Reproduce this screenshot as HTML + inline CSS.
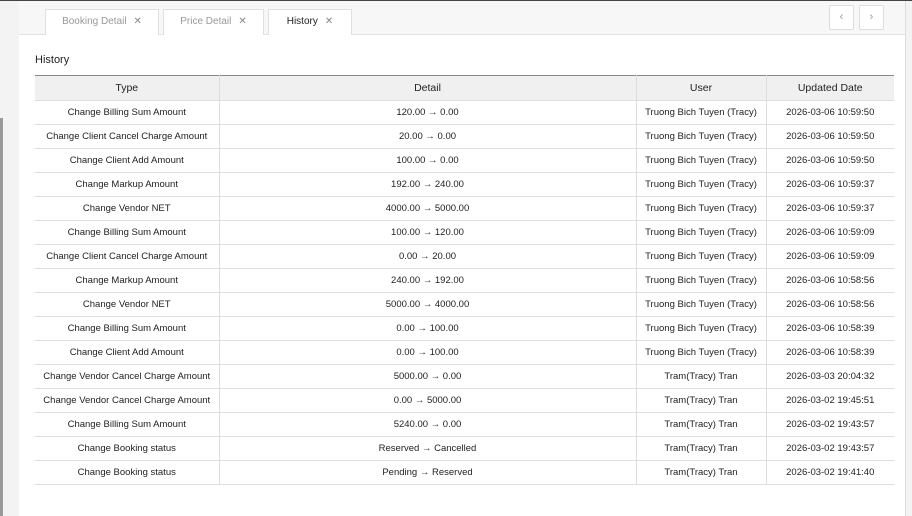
<!DOCTYPE html>
<html><head><style>
*{box-sizing:border-box;margin:0;padding:0}
body{width:912px;height:516px;overflow:hidden;background:#fff;font-family:"Liberation Sans",sans-serif;font-size:10px;color:#222;position:relative}
.top{position:absolute;left:0;top:0;width:912px;height:1px;background:#444}
.lstrip{position:absolute;left:0;top:1px;width:19px;height:515px;background:#f3f3f3}
.lbar{position:absolute;left:0;top:118px;width:3px;height:398px;background:#999}
.rstrip{position:absolute;left:905px;top:1px;width:7px;height:515px;background:#f3f3f3;border-left:1px solid #ddd}
.hdr{position:absolute;left:19px;top:1px;width:886px;height:34px;background:#f7f7f7;border-bottom:1px solid #e2e2e2}
.tab{position:absolute;top:9px;height:26px;border:1px solid #e0e0e0;border-bottom:none;background:#fff;font-size:10px;color:#999;text-align:center;line-height:24px}
.tab .x{color:#888;font-size:10px;margin-left:7px}
.tab.act{color:#222;height:26px}
.nb{position:absolute;top:5px;width:25px;height:25px;border:1px solid #ddd;background:#fff;color:#999;text-align:center;line-height:23px;font-size:11px;border-radius:2px}
h3{position:absolute;left:35px;top:54px;font-size:11px;font-weight:normal;color:#222}
table{position:absolute;left:35px;top:75px;width:859px;border-collapse:collapse;border-top:1px solid #888;border-bottom:1px solid #888}
th{background:#f0f0f0;height:25px;font-weight:normal;font-size:10.5px;border-left:1px solid #ddd;border-bottom:1px solid #ddd}
td{height:24px;text-align:center;font-size:9.5px;border-left:1px solid #ddd;border-bottom:1px solid #ddd;color:#222}
th:first-child,td:first-child{border-left:none}
td:nth-child(2){font-family:"Liberation Sans","DejaVu Sans",sans-serif}
</style></head><body>
<div class="top"></div><div class="lstrip"></div><div class="lbar"></div><div class="rstrip"></div>
<div class="hdr"></div>
<div class="tab" style="left:45px;width:114px">Booking Detail<span class="x">✕</span></div>
<div class="tab" style="left:163px;width:101px">Price Detail<span class="x">✕</span></div>
<div class="tab act" style="left:268px;width:84px">History<span class="x">✕</span></div>
<div class="nb" style="left:829px">‹</div><div class="nb" style="left:859px">›</div>
<h3>History</h3>
<table>
<tr><th style="width:184px">Type</th><th style="width:417px">Detail</th><th style="width:130px">User</th><th>Updated Date</th></tr>
<tr><td>Change Billing Sum Amount</td><td>120.00 → 0.00</td><td>Truong Bich Tuyen (Tracy)</td><td>2026-03-06 10:59:50</td></tr>
<tr><td>Change Client Cancel Charge Amount</td><td>20.00 → 0.00</td><td>Truong Bich Tuyen (Tracy)</td><td>2026-03-06 10:59:50</td></tr>
<tr><td>Change Client Add Amount</td><td>100.00 → 0.00</td><td>Truong Bich Tuyen (Tracy)</td><td>2026-03-06 10:59:50</td></tr>
<tr><td>Change Markup Amount</td><td>192.00 → 240.00</td><td>Truong Bich Tuyen (Tracy)</td><td>2026-03-06 10:59:37</td></tr>
<tr><td>Change Vendor NET</td><td>4000.00 → 5000.00</td><td>Truong Bich Tuyen (Tracy)</td><td>2026-03-06 10:59:37</td></tr>
<tr><td>Change Billing Sum Amount</td><td>100.00 → 120.00</td><td>Truong Bich Tuyen (Tracy)</td><td>2026-03-06 10:59:09</td></tr>
<tr><td>Change Client Cancel Charge Amount</td><td>0.00 → 20.00</td><td>Truong Bich Tuyen (Tracy)</td><td>2026-03-06 10:59:09</td></tr>
<tr><td>Change Markup Amount</td><td>240.00 → 192.00</td><td>Truong Bich Tuyen (Tracy)</td><td>2026-03-06 10:58:56</td></tr>
<tr><td>Change Vendor NET</td><td>5000.00 → 4000.00</td><td>Truong Bich Tuyen (Tracy)</td><td>2026-03-06 10:58:56</td></tr>
<tr><td>Change Billing Sum Amount</td><td>0.00 → 100.00</td><td>Truong Bich Tuyen (Tracy)</td><td>2026-03-06 10:58:39</td></tr>
<tr><td>Change Client Add Amount</td><td>0.00 → 100.00</td><td>Truong Bich Tuyen (Tracy)</td><td>2026-03-06 10:58:39</td></tr>
<tr><td>Change Vendor Cancel Charge Amount</td><td>5000.00 → 0.00</td><td>Tram(Tracy) Tran</td><td>2026-03-03 20:04:32</td></tr>
<tr><td>Change Vendor Cancel Charge Amount</td><td>0.00 → 5000.00</td><td>Tram(Tracy) Tran</td><td>2026-03-02 19:45:51</td></tr>
<tr><td>Change Billing Sum Amount</td><td>5240.00 → 0.00</td><td>Tram(Tracy) Tran</td><td>2026-03-02 19:43:57</td></tr>
<tr><td>Change Booking status</td><td>Reserved → Cancelled</td><td>Tram(Tracy) Tran</td><td>2026-03-02 19:43:57</td></tr>
<tr><td>Change Booking status</td><td>Pending → Reserved</td><td>Tram(Tracy) Tran</td><td>2026-03-02 19:41:40</td></tr>
</table>
</body></html>
